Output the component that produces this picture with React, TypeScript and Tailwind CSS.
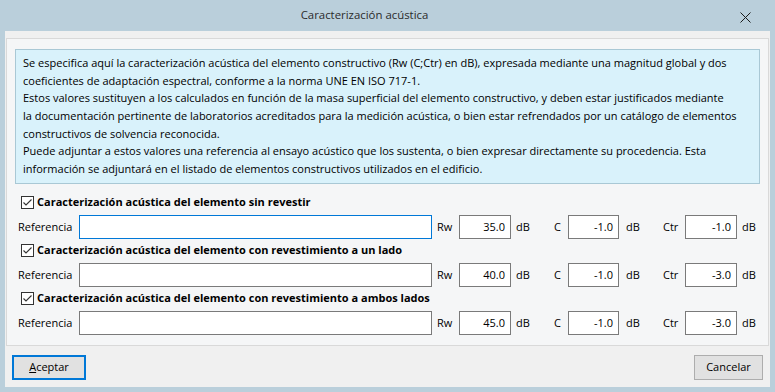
import React from "react";

const font = { fontFamily: '"Open Sans", "Noto Sans", sans-serif' };

const infoLines = [
  "Se especifica aquí la caracterización acústica del elemento constructivo (Rw (C;Ctr) en dB), expresada mediante una magnitud global y dos",
  "coeficientes de adaptación espectral, conforme a la norma UNE EN ISO 717-1.",
  "Estos valores sustituyen a los calculados en función de la masa superficial del elemento constructivo, y deben estar justificados mediante",
  "la documentación pertinente de laboratorios acreditados para la medición acústica, o bien estar refrendados por un catálogo de elementos",
  "constructivos de solvencia reconocida.",
  "Puede adjuntar a estos valores una referencia al ensayo acústico que los sustenta, o bien expresar directamente su procedencia. Esta",
  "información se adjuntará en el listado de elementos constructivos utilizados en el edificio.",
];

const sections = [
  { title: "Caracterización acústica del elemento sin revestir", rw: "35.0", c: "-1.0", ctr: "-1.0", focused: true },
  { title: "Caracterización acústica del elemento con revestimiento a un lado", rw: "40.0", c: "-1.0", ctr: "-3.0", focused: false },
  { title: "Caracterización acústica del elemento con revestimiento a ambos lados", rw: "45.0", c: "-1.0", ctr: "-3.0", focused: false },
];

function CheckBox() {
  return (
    <svg width="13" height="13" viewBox="0 0 13 13" className="shrink-0">
      <rect x="0.5" y="0.5" width="12" height="12" fill="#ffffff" stroke="#333333" />
      <path d="M2.5 6.5 L5 9 L10.5 3.5" fill="none" stroke="#333333" strokeWidth="1.1" />
    </svg>
  );
}

function NumBox({ value, w }: { value: string; w: string }) {
  return (
    <div className={`${w} flex h-[24px] shrink-0 items-center justify-end border border-[#7a7a7a] bg-white pr-[5px] text-black`}>
      {value}
    </div>
  );
}

export default function App() {
  return (
    <div
      className="flex h-[392px] w-[775px] flex-col bg-[#bacfdb] px-[5px] pb-[5px] text-[11px] text-black"
      style={font}
    >
      {/* Title bar */}
      <div className="relative flex h-[31px] shrink-0 items-center justify-center pr-[46px]">
        <span className="pb-[2px] text-[11.4px] text-[#2b2b2b]">Caracterización acústica</span>
        <svg width="11" height="11" viewBox="0 0 11 11" className="absolute right-[19px] top-[12px]">
          <path d="M0.5 0.5 L10.5 10.5 M10.5 0.5 L0.5 10.5" stroke="#1a1a1a" strokeWidth="1" />
        </svg>
      </div>

      {/* Client area */}
      <div className="flex flex-1 flex-col bg-[#f0f0f0] px-[1px] pt-[7px]">
        <div className="flex h-[308px] flex-col border border-[#d9d9d9] bg-[#f5f6f7]">
          <div className="ml-[8px] mt-[10px] h-[135px] w-[745px] border border-[#a9c8d5] bg-[#d9f2fb] px-[7px] py-[4px] leading-[17.67px]">
            {infoLines.map((l) => (
              <div key={l} className="whitespace-nowrap">
                {l}
              </div>
            ))}
          </div>

          <div className="mt-[10px] flex flex-col gap-[3px]">
            {sections.map((s) => (
              <div key={s.title} className="flex flex-col gap-[5px]">
                <div className="flex h-[16px] items-center gap-[3px] pl-[14px]">
                  <CheckBox />
                  <span className="whitespace-nowrap font-bold">{s.title}</span>
                </div>
                <div className="flex h-[24px] items-center pl-[11px]">
                  <span className="w-[61px] shrink-0">Referencia</span>
                  <div
                    className={`h-[24px] w-[353px] shrink-0 border bg-white ${
                      s.focused ? "border-[#0078d7]" : "border-[#7a7a7a]"
                    }`}
                  />
                  <span className="ml-[5px] w-[22px] shrink-0">Rw</span>
                  <NumBox value={s.rw} w="w-[52px]" />
                  <span className="ml-[5px] w-[38px] shrink-0">dB</span>
                  <span className="w-[14px] shrink-0">C</span>
                  <NumBox value={s.c} w="w-[51px]" />
                  <span className="ml-[7px] w-[37px] shrink-0">dB</span>
                  <span className="w-[22px] shrink-0">Ctr</span>
                  <NumBox value={s.ctr} w="w-[52px]" />
                  <span className="ml-[5px] shrink-0">dB</span>
                </div>
              </div>
            ))}
          </div>
        </div>

        {/* Buttons */}
        <div className="mt-[9px] flex items-start justify-between pl-[6px] pr-[6px]">
          <button className="flex h-[25px] w-[74px] items-center justify-center border-2 border-[#0078d7] bg-[#e1e1e1] text-black">
            <span>
              <span className="underline">A</span>ceptar
            </span>
          </button>
          <button className="flex h-[25px] w-[69px] items-center justify-center border border-[#adadad] bg-[#e1e1e1] text-black">
            Cancelar
          </button>
        </div>
      </div>
    </div>
  );
}
